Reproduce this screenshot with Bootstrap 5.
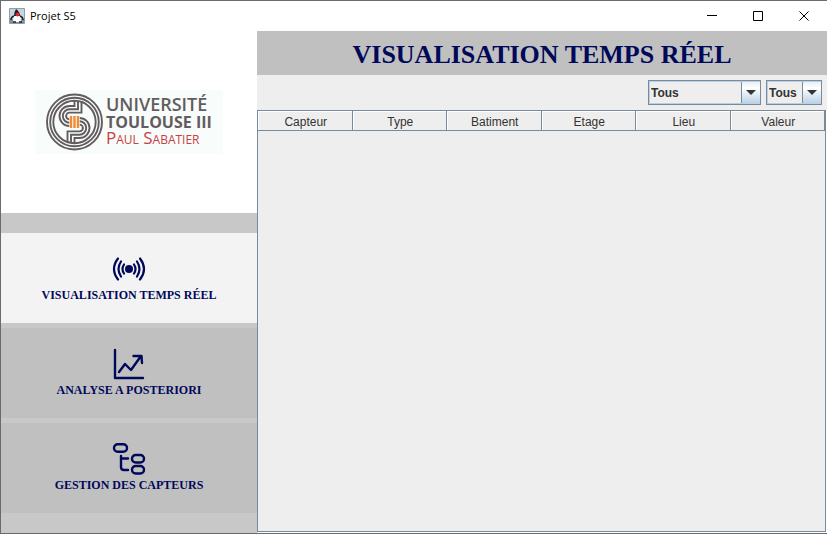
<!DOCTYPE html>
<html lang="fr">
<head>
<meta charset="utf-8">
<meta name="viewport" content="width=device-width, initial-scale=1">
<title>Projet S5</title>
<link href="https://cdn.jsdelivr.net/npm/bootstrap@5.3.0/dist/css/bootstrap.min.css" rel="stylesheet">
<style>
  :root { --navy: #00085a; --metal: #7a8a99; --panel: #eeeeee; --strip: #c8c8c8; --tile: #c0c0c0; }
  body { font-family: "Liberation Sans", Arial, sans-serif; font-size: 12px; line-height: 16px; color: #333; background: #fff; }
  .window { border: 1px solid #6b6b6b; border-right: 0; }
  .titlebar { height: 30px; font-family: "Open Sans", sans-serif; color: #000; }
  .titlebar button { width: 46px; height: 30px; }
  .app-name { font-size: 11px; padding-left: 5px; }
  .side { width: 256px; background: var(--strip); }
  .brand { height: 182px; }
  .side-menu { padding-top: 20px; gap: 5px; }
  .side-item { height: 90px; gap: 2px; padding-top: 6px; background: var(--tile); color: var(--navy); font: bold 12px/16px "Liberation Serif", "Times New Roman", serif; }
  .side-item.current { background: #f3f3f3; }
  .page-head { height: 44px; background: var(--tile); }
  .page-head h1 { font: bold 26px/32px "Liberation Serif", "Times New Roman", serif; color: var(--navy); padding-top: 3px; }
  .main-pane { background: var(--panel); }
  .filters { padding: 5px; gap: 5px; }
  .combo {
    appearance: none; height: 25px; width: 56px; padding: 0 20px 0 2px; border: 1px solid var(--metal); border-radius: 0; color: #333;
    font: bold 12px/16px "Liberation Sans", Arial, sans-serif;
    background:
      url("data:image/svg+xml,%3Csvg xmlns='http://www.w3.org/2000/svg' width='10' height='5'%3E%3Cpath d='M0 0h10L5 5z' fill='%23333'/%3E%3C/svg%3E") right 4px center / 10px 5px no-repeat,
      linear-gradient(#e4eef7, #fff 30%, #b8cfe5) right / 18px 100% no-repeat,
      linear-gradient(var(--metal), var(--metal)) right 18px top / 1px 100% no-repeat,
      var(--panel);
    box-shadow: inset 1px 1px #b8cfe5, inset 0 -1px #b8cfe5;
  }
  .combo-wide { width: 113px; }
  .grid-pane { border: 1px solid var(--metal); border-top: 0; margin: 0 1px 1px 0; box-shadow: 1px 1px #fff; }
  .sensors { table-layout: fixed; border-collapse: separate; border-spacing: 0; }
  .sensors th { height: 21px; padding: 3px 0 0 2px; font-weight: normal; font-size: 12px; line-height: 16px; text-align: center; border: solid var(--metal); border-width: 1px 1px 1px 0; box-shadow: inset 1px 1px #fff; }
</style>
<script src="https://cdn.jsdelivr.net/npm/bootstrap@5.3.0/dist/js/bootstrap.bundle.min.js"></script>
</head>
<body>
<div class="window d-flex flex-column min-vh-100">
  <header class="titlebar d-flex align-items-center bg-white">
    <svg class="ms-2" width="16" height="16" viewBox="0 0 16 16" aria-hidden="true">
      <path d="M.5.5h15v15H.5z" fill="#c3d4e2" stroke="#8d9dab"/>
      <path d="M1 11h14v4H1z" fill="#7e8e9a"/>
      <path d="M7 1Q5 4 5 8h6Q11 4 7 1z" fill="#1c1c1c"/>
      <path d="M5 8h6q1 3 1 6H4q0-3 1-6z" fill="#fff"/>
      <path d="M5 8q-3 1-3 4M11 8q3 1 3 4M4 14h3M10 14h3" fill="none" stroke="#252525" stroke-width="1.500"/>
      <circle cx="8.500" cy="6.500" r="2" fill="#e5202c"/>
    </svg>
    <span class="app-name me-auto">Projet S5</span>
    <button class="btn p-0 border-0 rounded-0 d-flex align-items-center justify-content-center" type="button" aria-label="Réduire"><svg width="11" height="11" viewBox="0 0 11 11"><path d="M0 4.500h10" stroke="#000"/></svg></button>
    <button class="btn p-0 border-0 rounded-0 d-flex align-items-center justify-content-center" type="button" aria-label="Agrandir"><svg width="11" height="11" viewBox="0 0 11 11"><path d="M.5.5h9v9h-9z" fill="none" stroke="#000"/></svg></button>
    <button class="btn p-0 border-0 rounded-0 d-flex align-items-center justify-content-center" type="button" aria-label="Fermer"><svg width="11" height="11" viewBox="0 0 11 11"><path d="M.5.5l9 9M9.500.5l-9 9" stroke="#000"/></svg></button>
  </header>

  <div class="d-flex flex-grow-1">
    <aside class="side d-flex flex-column flex-shrink-0">
      <div class="brand bg-white d-flex align-items-center justify-content-center">
        <svg width="188" height="64" viewBox="0 0 188 64" role="img" aria-label="Université Toulouse III Paul Sabatier">
          <path d="M0 0h188v64H0z" fill="#f8fdfc"/>
          <g transform="translate(39.500 32)" fill="none" stroke="#635c5e" stroke-width="1.900">
            <circle r="27.500"/><circle r="24.300"/><circle r="21.200"/>
            <g id="ribbon">
              <path d="M0-21V-16H-5A10 10 0 0 0-5 4"/>
              <path d="M3.500-21V-12.700H-5A6.700 6.700 0 0 0-5 .7"/>
              <path d="M7-20V-9.400H-5A3.400 3.400 0 0 0-5-2.600"/>
            </g>
            <use href="#ribbon" transform="rotate(180)"/>
            <path d="M-5-7H5V7H-5z" fill="#f8fdfc" stroke="none"/>
            <path d="M-3.500-6v12M0-6v12M3.500-6v12" stroke="#f08a35" stroke-width="2.400"/>
          </g>
          <g font-family="Open Sans, sans-serif" fill="#635c5e">
            <text x="71" y="21" font-size="18" font-weight="600">UNIVERSITÉ</text>
            <text x="71" y="38" font-size="16" font-weight="700">TOULOUSE III</text>
            <text x="71" y="54" font-size="17" font-weight="400" fill="#c8403f" font-variant="small-caps">Paul Sabatier</text>
          </g>
        </svg>
      </div>
      <nav class="side-menu d-flex flex-column" aria-label="Menu principal">
        <button type="button" class="side-item current btn border-0 rounded-0 d-flex flex-column align-items-center justify-content-center" aria-current="page">
          <svg width="34" height="32" viewBox="0 0 34 32" fill="none" stroke="currentColor" stroke-width="2.200" stroke-linecap="round" aria-hidden="true">
            <circle cx="17" cy="16" r="4" fill="currentColor" stroke="none"/>
            <path d="M12 11.500q-3 4.500 0 9M9 8.500q-5 7.500 0 15M6 5.500q-8 10.500 0 21M22 11.500q3 4.500 0 9M25 8.500q5 7.500 0 15M28 5.500q8 10.500 0 21"/>
          </svg>
          VISUALISATION TEMPS RÉEL
        </button>
        <button type="button" class="side-item btn border-0 rounded-0 d-flex flex-column align-items-center justify-content-center">
          <svg width="34" height="32" viewBox="0 0 34 32" fill="none" stroke="currentColor" stroke-width="2.400" stroke-linecap="round" stroke-linejoin="round" aria-hidden="true">
            <path d="M3 2v28h28M7 24l6-8 6 6L29 8M21.500 8h8l.5 7"/>
          </svg>
          ANALYSE A POSTERIORI
        </button>
        <button type="button" class="side-item btn border-0 rounded-0 d-flex flex-column align-items-center justify-content-center">
          <svg width="34" height="32" viewBox="0 0 34 32" fill="none" stroke="currentColor" stroke-width="2.400" stroke-linecap="round" stroke-linejoin="round" aria-hidden="true">
            <rect x="2" y="1.200" width="13" height="7.500" rx="3.700"/>
            <rect x="20" y="12" width="12" height="7.500" rx="3.700"/>
            <rect x="20" y="23" width="12" height="7.500" rx="3.700"/>
            <path d="M9 13v11q0 3 3 3h4M9 15.500h7"/>
          </svg>
          GESTION DES CAPTEURS
        </button>
      </nav>
    </aside>

    <main class="main-pane d-flex flex-column flex-grow-1">
      <div class="page-head d-flex align-items-center justify-content-center"><h1 class="m-0">VISUALISATION TEMPS RÉEL</h1></div>
      <form class="filters d-flex justify-content-end">
        <select class="combo combo-wide" aria-label="Bâtiment"><option>Tous</option></select>
        <select class="combo" aria-label="Étage"><option>Tous</option></select>
      </form>
      <div class="grid-pane flex-grow-1">
        <table class="sensors w-100">
          <thead><tr><th scope="col">Capteur</th><th scope="col">Type</th><th scope="col">Batiment</th><th scope="col">Etage</th><th scope="col">Lieu</th><th scope="col">Valeur</th></tr></thead>
        </table>
      </div>
    </main>
  </div>
</div>
</body>
</html>
